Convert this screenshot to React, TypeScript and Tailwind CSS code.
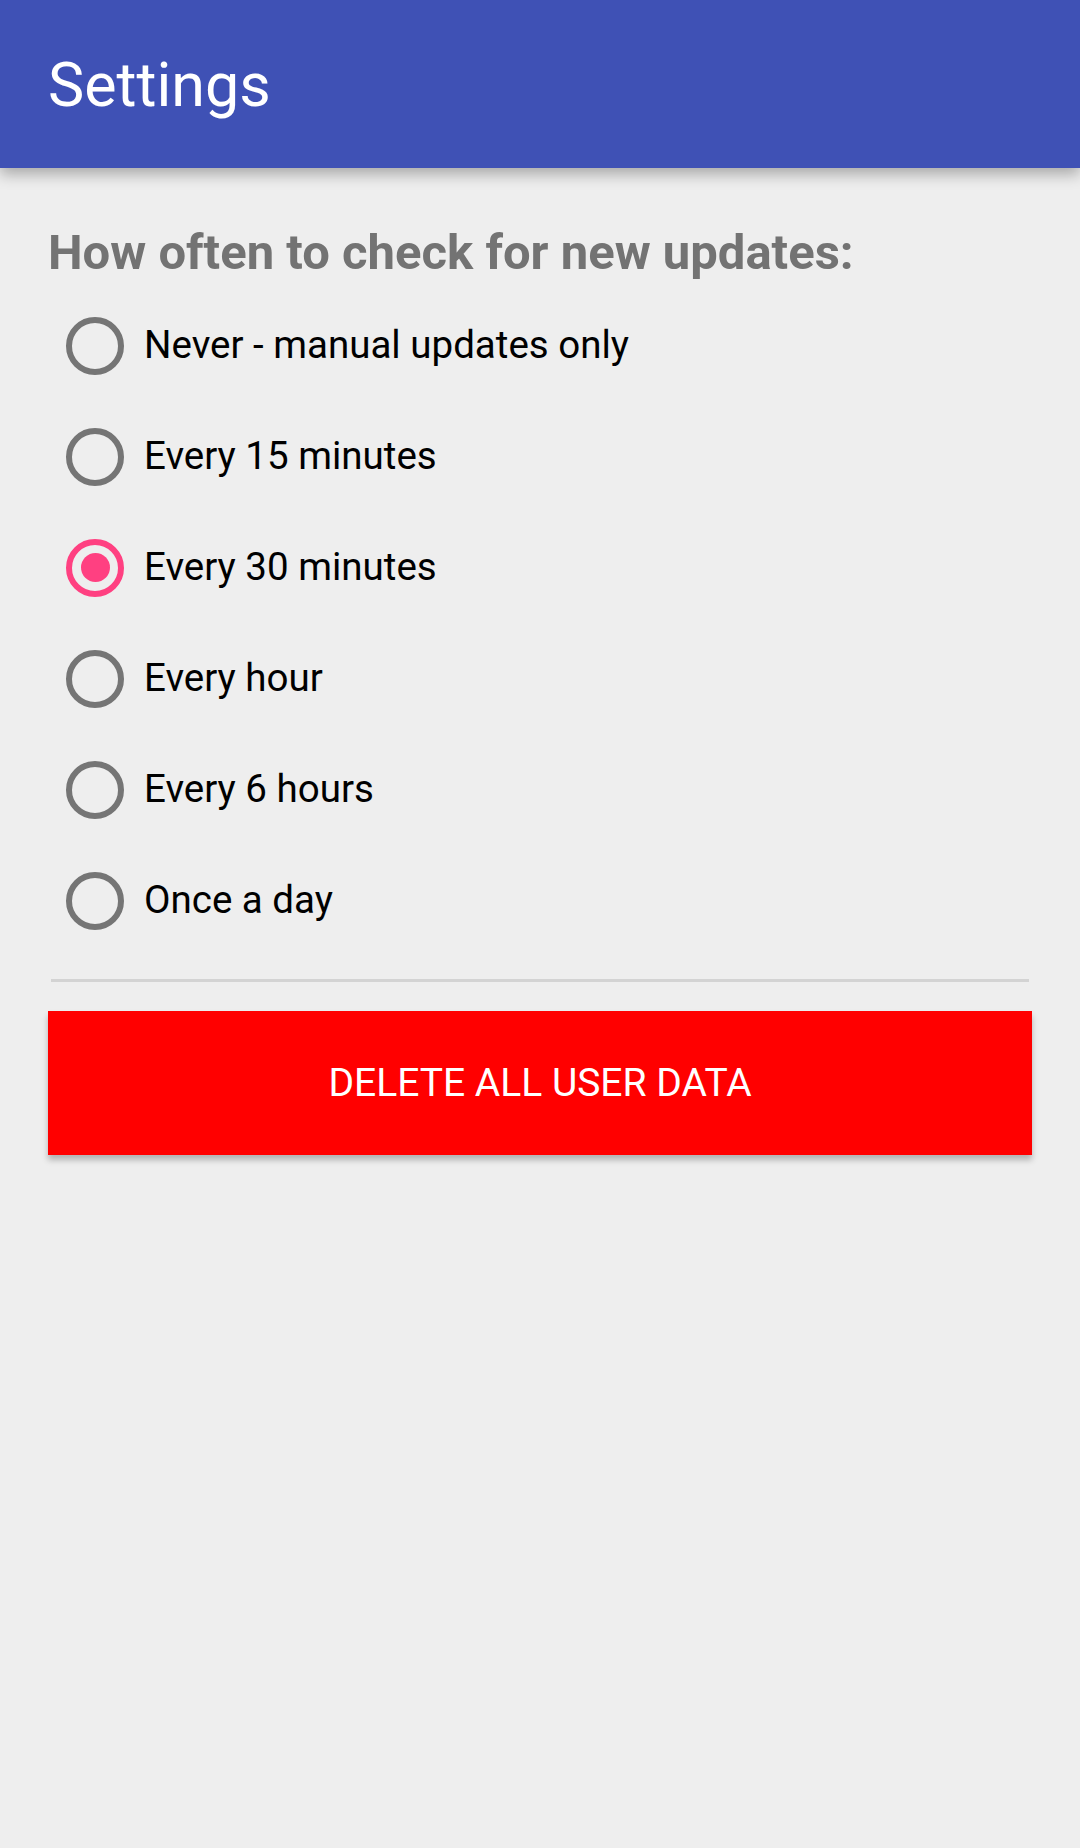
import React from "react";

const options = [
  "Never - manual updates only",
  "Every 15 minutes",
  "Every 30 minutes",
  "Every hour",
  "Every 6 hours",
  "Once a day",
];

function Radio({ checked }: { checked: boolean }) {
  return (
    <div
      className={
        "w-[58px] h-[58px] rounded-full border-[6px] flex items-center justify-center shrink-0 " +
        (checked ? "border-[#FF4081]" : "border-[#757575]")
      }
    >
      {checked && <div className="w-[29px] h-[29px] rounded-full bg-[#FF4081]" />}
    </div>
  );
}

export default function App() {
  return (
    <div
      className="w-[1080px] h-[1848px] bg-[#EEEEEE] flex flex-col"
      style={{ fontFamily: "Roboto, 'Noto Sans', sans-serif" }}
    >
      <div className="h-[168px] bg-[#3F51B5] flex items-center pl-[48px] shadow-[0_6px_14px_rgba(0,0,0,0.3)] relative z-10">
        <span className="text-white text-[61px] leading-none mt-[2px]">Settings</span>
      </div>
      <div className="px-[48px] pt-[49px] flex flex-col">
        <div className="text-[#737373] font-bold text-[49px] leading-[72px]">
          How often to check for new updates:
        </div>
        <div className="flex flex-col pt-[1px]">
          {options.map((o, i) => (
            <div key={o} className="h-[111px] flex items-center pl-[18px] gap-[20px]">
              <Radio checked={i === 2} />
              <span className="text-black text-[38.5px] leading-none">{o}</span>
            </div>
          ))}
        </div>
        <div className="mt-[23px] mx-[3px] h-[3px] bg-[#D3D3D3]" />
        <button className="mt-[29px] h-[144px] w-full bg-[#FF0000] text-white text-[39px] uppercase shadow-[0_5px_6px_rgba(0,0,0,0.25)]">
          Delete all user data
        </button>
      </div>
    </div>
  );
}
